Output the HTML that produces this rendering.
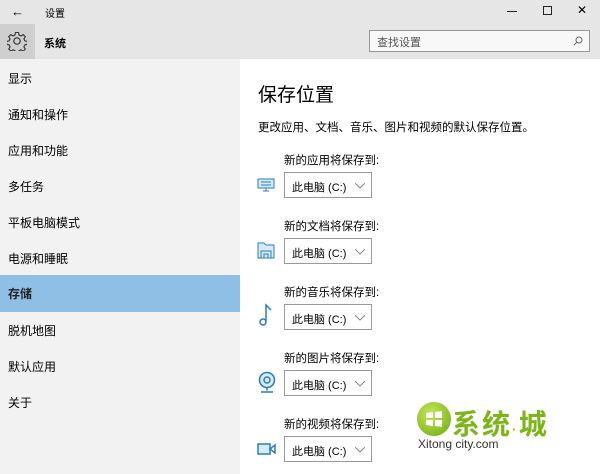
<!DOCTYPE html>
<html><head><meta charset="utf-8"><style>
*{margin:0;padding:0;box-sizing:border-box}
body{width:600px;height:474px;overflow:hidden;background:#fff;font-family:"Liberation Sans","Noto Sans CJK SC",sans-serif;color:#000;position:relative}
.top{position:absolute;left:0;top:0;width:600px;height:59px;background:#e6e6e6}
.t{position:absolute;font-size:11px}
.side{position:absolute;left:0;top:59px;width:240px;height:415px;background:#f2f2f2}
.item{position:absolute;left:8px;font-size:12px}
.sel{position:absolute;left:0;top:275px;width:240px;height:37px;background:#90bfe6}
.dd{position:absolute;left:284px;width:88px;height:26px;border:1px solid #999;background:#fff;font-size:11px;padding:6px 0 0 7px}
.dd svg{position:absolute;right:6px;top:10px}
.lab{position:absolute;left:284px;font-size:11.5px}
.ic{position:absolute;left:257px}
</style></head><body>
<div class="top"></div>
<div class="t" style="left:11px;top:4px;font-size:13px">←</div>
<div class="t" style="left:45px;top:5px;font-size:10px">设置</div>
<div style="position:absolute;left:507px;top:11px;width:10px;height:1px;background:#222"></div>
<div style="position:absolute;left:543px;top:6px;width:9px;height:9px;border:1px solid #222"></div>
<div class="t" style="left:577px;top:3px;font-size:12px">✕</div>
<div style="position:absolute;left:0;top:24px;width:35px;height:35px;background:#cfcfcf"></div>
<svg style="position:absolute;left:7px;top:31px" width="20" height="20" viewBox="0 0 20 20"><circle cx="10" cy="10" r="3.2" fill="none" stroke="#333" stroke-width="1.2"/><path d="M8.5 1.5h3l.5 2.5 2 1 2.2-1.4 2.1 2.1-1.4 2.2 1 2 2.5.5v3l-2.5.5-1 2 1.4 2.2-2.1 2.1-2.2-1.4-2 1-.5 2.5h-3l-.5-2.5-2-1-2.2 1.4-2.1-2.1 1.4-2.2-1-2-2.5-.5v-3l2.5-.5 1-2-1.4-2.2 2.1-2.1 2.2 1.4 2-1z" fill="none" stroke="#333" stroke-width="1.1"/></svg>
<div class="t" style="left:44px;top:35px;font-size:11px;font-weight:bold">系统</div>
<div style="position:absolute;left:369px;top:30px;width:221px;height:22px;border:1px solid #999;background:#f8f8f8;font-size:11px;color:#555;padding:3px 0 0 7px">查找设置<svg style="position:absolute;right:6px;top:5px" width="10" height="10"><circle cx="6" cy="4" r="3" fill="none" stroke="#666"/><path d="M4 6L1 9" stroke="#666"/></svg></div>
<div class="side"></div>
<div class="sel"></div>
<div class="item" style="top:70px">显示</div>
<div class="item" style="top:106px">通知和操作</div>
<div class="item" style="top:142px">应用和功能</div>
<div class="item" style="top:178px">多任务</div>
<div class="item" style="top:214px">平板电脑模式</div>
<div class="item" style="top:250px">电源和睡眠</div>
<div class="item" style="top:285px;font-weight:bold;color:#222">存储</div>
<div class="item" style="top:322px">脱机地图</div>
<div class="item" style="top:358px">默认应用</div>
<div class="item" style="top:394px">关于</div>
<div style="position:absolute;left:258px;top:80px;font-size:19px">保存位置</div>
<div style="position:absolute;left:258px;top:119px;font-size:11.5px">更改应用、文档、音乐、图片和视频的默认保存位置。</div>

<div class="lab" style="top:152px">新的应用将保存到:</div>
<div class="dd" style="top:172px">此电脑 (C:)<svg width="10" height="6"><path d="M0 0l5 5 5-5" fill="none" stroke="#888"/></svg></div>
<svg class="ic" style="top:178px" width="18" height="14" viewBox="0 0 18 14"><rect x="1" y="1" width="16" height="9" fill="#d8ecf8" stroke="#2a7bc0"/><path d="M4 4h10M4 7h10M9 10v3M6 13h6" stroke="#2a7bc0"/></svg>

<div class="lab" style="top:218px">新的文档将保存到:</div>
<div class="dd" style="top:238px">此电脑 (C:)<svg width="10" height="6"><path d="M0 0l5 5 5-5" fill="none" stroke="#888"/></svg></div>
<svg class="ic" style="top:241px" width="18" height="18" viewBox="0 0 18 18"><path d="M1 2h6l2 2h8v13H1z" fill="#d8ecf8" stroke="#2a7bc0"/><path d="M4 17V10h10v7M7 17v-4h4v4" fill="none" stroke="#2a7bc0"/></svg>

<div class="lab" style="top:284px">新的音乐将保存到:</div>
<div class="dd" style="top:304px">此电脑 (C:)<svg width="10" height="6"><path d="M0 0l5 5 5-5" fill="none" stroke="#888"/></svg></div>
<svg class="ic" style="top:303px" width="18" height="24" viewBox="0 0 18 24"><circle cx="6" cy="19" r="3" fill="none" stroke="#2a7bc0" stroke-width="1.5"/><path d="M9 19V2l5 5" fill="none" stroke="#2a7bc0" stroke-width="1.5"/></svg>

<div class="lab" style="top:350px">新的图片将保存到:</div>
<div class="dd" style="top:370px">此电脑 (C:)<svg width="10" height="6"><path d="M0 0l5 5 5-5" fill="none" stroke="#888"/></svg></div>
<svg class="ic" style="top:371px" width="20" height="22" viewBox="0 0 20 22"><circle cx="10" cy="9" r="7.5" fill="#d8ecf8" stroke="#2a7bc0" stroke-width="1.5"/><circle cx="10" cy="9" r="3" fill="none" stroke="#2a7bc0" stroke-width="1.5"/><path d="M10 16.5v3M4 21h12" stroke="#2a7bc0" stroke-width="1.5"/></svg>

<div class="lab" style="top:416px">新的视频将保存到:</div>
<div class="dd" style="top:436px">此电脑 (C:)<svg width="10" height="6"><path d="M0 0l5 5 5-5" fill="none" stroke="#888"/></svg></div>
<svg class="ic" style="top:442px" width="20" height="14" viewBox="0 0 20 14"><rect x="1" y="2" width="12" height="10" fill="#d8ecf8" stroke="#2a7bc0" stroke-width="1.5"/><path d="M13 7l5-4v8z" fill="none" stroke="#2a7bc0" stroke-width="1.5"/></svg>

<div style="position:absolute;left:417px;top:402px;width:34px;height:34px;border-radius:50%;background:radial-gradient(circle at 40% 35%,#c6e85a,#6aa80f)"></div>
<svg style="position:absolute;left:425px;top:410px" width="18" height="18"><path d="M1 3l7-1v6H1zM10 2l7-1v7h-7zM1 10h7v6l-7-1zM10 10h7v7l-7-1z" fill="#fff"/></svg>
<div style="position:absolute;left:452px;top:403px;font-size:28px;color:#7cb518;font-weight:bold;letter-spacing:2px">系统<span style="font-size:14px;color:#e8a000">·</span>城</div>
<div style="position:absolute;left:418px;top:437px;font-size:12px;color:#333">Xitong city.com</div>
</body></html>
